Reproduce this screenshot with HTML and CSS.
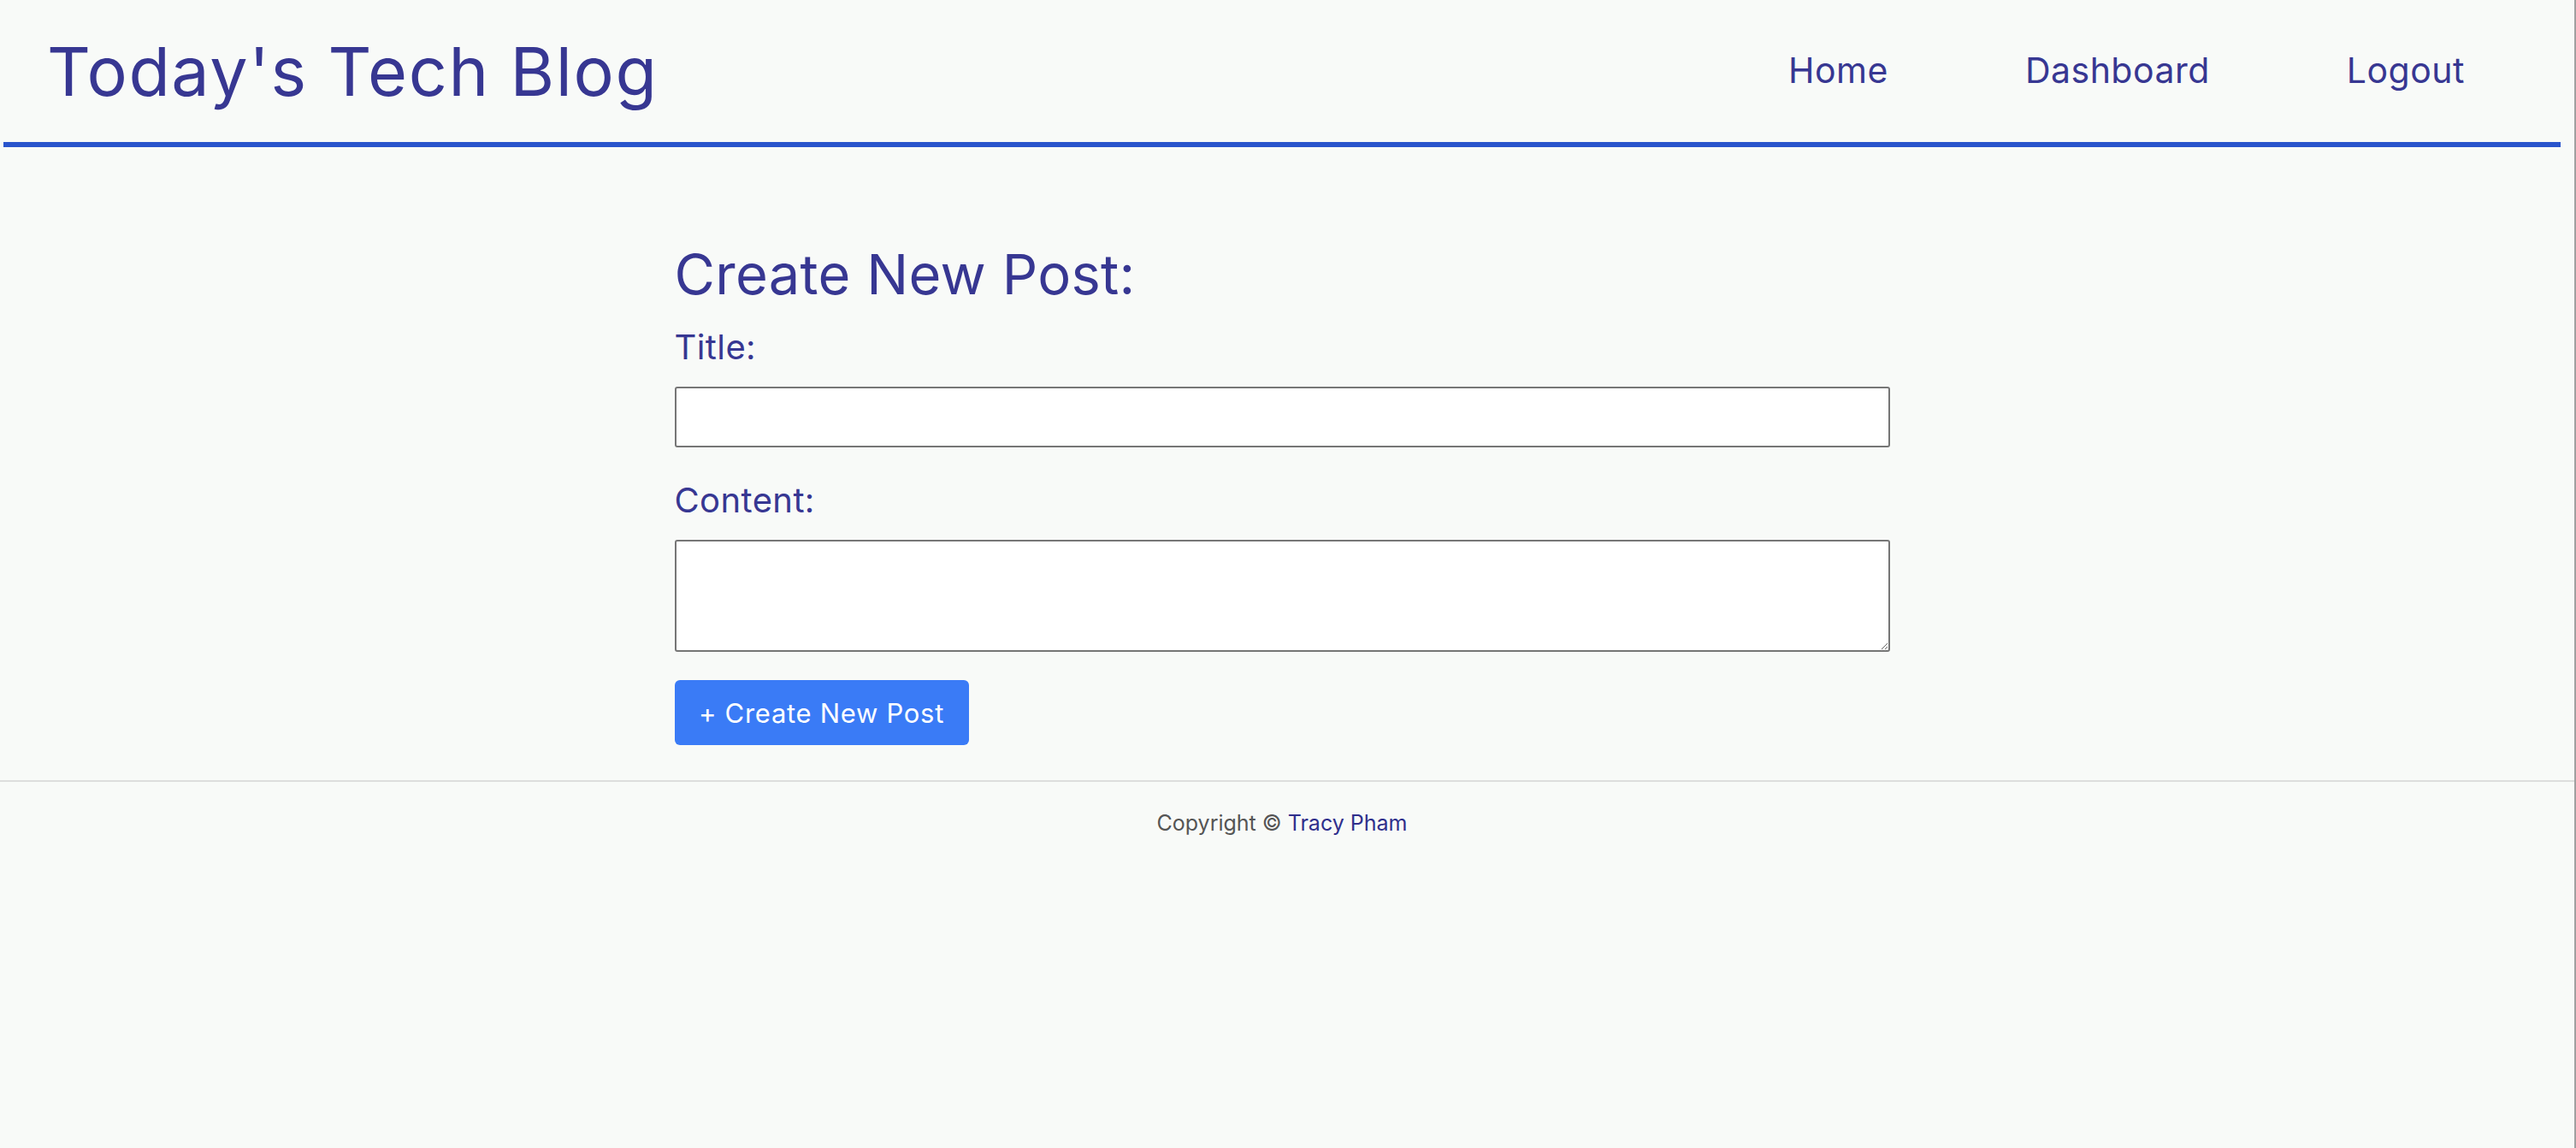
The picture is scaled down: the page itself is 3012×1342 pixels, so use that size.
FILE: index.html
```html
<!DOCTYPE html>
<html lang="en">
<head>
<meta charset="utf-8">
<title>Today's Tech Blog</title>
<link rel="stylesheet" href="styles.css">
</head>
<body>
<div class="page">
  <header class="site-header">
    <h1 class="brand">Today's Tech Blog</h1>
    <nav class="nav">
      <a class="nav-link" href="#">Home</a>
      <a class="nav-link" href="#">Dashboard</a>
      <a class="nav-link" href="#">Logout</a>
    </nav>
  </header>
  <main class="main">
    <form class="post-form">
      <h2 class="form-title">Create New Post:</h2>
      <label class="field-label" for="title">Title:</label>
      <input class="field-input" id="title" type="text">
      <label class="field-label content-label" for="content">Content:</label>
      <textarea class="field-textarea" id="content"></textarea>
      <button class="btn-create" type="button">+ Create New Post</button>
    </form>
  </main>
  <footer class="site-footer">
    <p class="copyright">Copyright © <a class="author" href="#">Tracy Pham</a></p>
  </footer>
</div>
</body>
</html>
```
FILE: styles.css
```css
html, body {
  margin: 0;
  padding: 0;
  background: #f8faf8;
}
body {
  font-family: Inter, "Noto Sans", sans-serif;
  min-height: 1342px;
}
.page {
  width: 3010px;
  min-height: 1342px;
  border-right: 2px solid #a0a0a0;
}
.site-header {
  display: flex;
  align-items: center;
  justify-content: space-between;
  height: 166px;
  margin: 0 16px 0 4px;
  border-bottom: 6px solid #2a55cc;
  padding: 0 112px 0 51px;
}
.brand {
  margin: 0;
  font-size: 79px;
  line-height: 1.2;
  font-weight: 400;
  letter-spacing: 1.6px;
  color: #373792;
}
.nav {
  display: flex;
  gap: 160px;
}
.nav-link {
  font-size: 41px;
  line-height: 1.2;
  letter-spacing: 0.5px;
  color: #373792;
  text-decoration: none;
}
.main {
  display: flex;
  justify-content: center;
  padding: 110px 0 0 0;
}
.post-form {
  width: 1421px;
  margin-left: -12px;
  display: flex;
  flex-direction: column;
  align-items: flex-start;
}
.form-title {
  margin: 0 0 22px;
  font-size: 65px;
  line-height: 78px;
  font-weight: 400;
  letter-spacing: 0.3px;
  color: #373792;
}
.field-label {
  font-size: 40px;
  line-height: 48px;
  letter-spacing: 0.4px;
  color: #373792;
  margin-bottom: 22px;
}
.content-label {
  margin-top: 38px;
}
.field-input {
  box-sizing: border-box;
  width: 100%;
  height: 71px;
  margin: 0;
  border: 2px solid #767676;
  border-radius: 3px;
  background: #fff;
}
.field-textarea {
  box-sizing: border-box;
  width: 100%;
  height: 131px;
  margin: 0;
  border: 2px solid #767676;
  border-radius: 3px;
  background: #fff;
  resize: vertical;
}
.btn-create {
  margin-top: 33px;
  width: 344px;
  height: 76px;
  border: none;
  border-radius: 6px;
  background: #3a7bf6;
  color: #fff;
  font-family: Inter, "Noto Sans", sans-serif;
  font-size: 31px;
  letter-spacing: 0.7px;
  padding: 0;
}
.site-footer {
  margin-top: 41px;
  border-top: 2px solid #dddedd;
  display: flex;
  justify-content: center;
  padding-right: 12px;
}
.copyright {
  margin: 31px 0 0;
  font-size: 25px;
  line-height: 34px;
  color: #555;
}
.author {
  color: #2f2f8c;
  text-decoration: none;
}
```
